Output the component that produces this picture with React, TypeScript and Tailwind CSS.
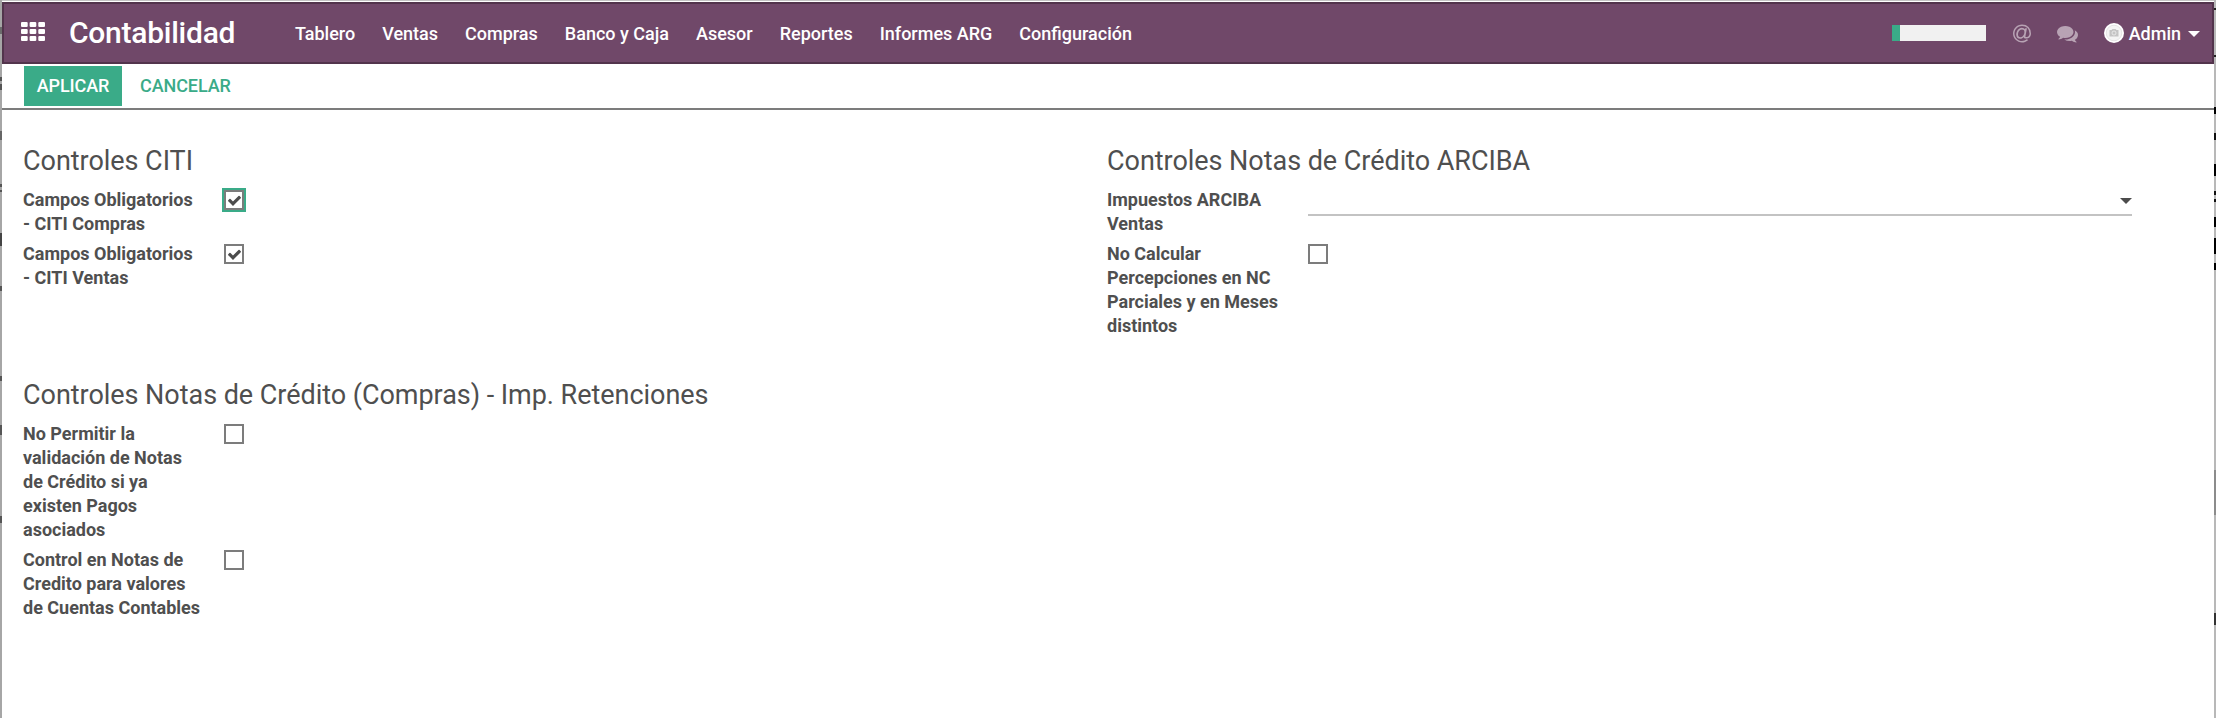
import React from "react";

const Check = () => (
  <svg viewBox="0 0 1792 1792" className="h-[15px] w-[15px] fill-[#4c4c4c]">
    <path d="M1671 566q0 40-28 68l-724 724-136 136q-28 28-68 28t-68-28l-136-136-362-362q-28-28-28-68t28-68l136-136q28-28 68-28t68 28l294 295 656-657q28-28 68-28t68 28l136 136q28 28 28 68z" />
  </svg>
);

const AppsIcon = () => (
  <svg viewBox="0 0 24 19" className="h-[19px] w-6 fill-white">
    {[0, 7, 14].map((y) =>
      [0, 8.6, 17.3].map((x) => <rect key={`${x}-${y}`} x={x} y={y} width="6.7" height="5" rx="1.1" />)
    )}
  </svg>
);

const AtIcon = () => (
  <svg viewBox="0 0 1536 1792" className="h-[21px] w-[18px] fill-[#b8a3b4]">
    <path d="M972 775q0-108-53.5-169t-147.5-61q-63 0-124 30.5t-110 84.5-79.5 137-30.5 180q0 112 53.5 173t150.5 61q96 0 176-66.5t122.5-166 42.5-203.5zm564 121q0 111-37 197t-98.5 135-131.5 74.5-145 27.5q-6 0-15.5.5t-16.5.5q-95 0-142-53-28-33-33-83-52 66-131.5 110t-173.5 44q-161 0-249.5-95.5t-88.5-269.5q0-157 66-290t179-210.5 246-77.5q87 0 155 35.5t106 99.5l2-19 11-56q1-6 5.5-12t9.5-6h118q5 0 13 11 5 5 3 16l-120 614q-5 24-5 48 0 39 12.5 52t44.5 13q28-1 57-5.5t73-24 77-50 57-89.5 24-137q0-292-174-466t-466-174q-130 0-248.5 51t-204 136.5-136.5 204-51 248.5 51 248.5 136.5 204 204 136.5 248.5 51q228 0 405-144 11-9 24-8t21 12l41 49q8 12 7 24-2 13-12 22-102 83-227.5 128t-258.5 45q-156 0-298-61t-245-164-164-245-61-298 61-298 164-245 245-164 298-61q344 0 556 212t212 556z" />
  </svg>
);

const CommentsIcon = () => (
  <svg viewBox="0 0 1792 1792" className="h-[21px] w-[21px] fill-[#b8a3b4]">
    <path d="M1408 768q0 139-94 257t-256.5 186.5-353.5 68.5q-86 0-176-16-124 88-278 128-36 9-86 16h-3q-11 0-20.5-8t-11.5-21q-1-3-1-6.5t.5-6.5 2-6l2.5-5 3.5-5.5 4-5 4.5-5 4-4.5q5-6 23-25t26-29.5 22.5-29 25-38.5 20.5-44q-124-72-195-177t-71-224q0-139 94-257t256.5-186.5 353.5-68.5 353.5 68.5 256.5 186.5 94 257zm384 256q0 120-71 224.5t-195 176.5q10 24 20.5 44t25 38.5 22.5 29 26 29.5 23 25q1 1 4 4.5t4.5 5 4 5 3.5 5.5l2.5 5 2 6 .5 6.5-1 6.5q-3 14-13 22t-22 7q-50-7-86-16-154-40-278-128-90 16-176 16-271 0-472-132 58 4 88 4 161 0 309-45t264-129q125-92 192-212t67-254q0-77-23-152 129 71 204 178t75 230z" />
  </svg>
);

const Avatar = () => (
  <svg viewBox="0 0 20 20" className="h-5 w-5">
    <circle cx="10" cy="10" r="10" fill="#fff" />
    <circle cx="10" cy="10" r="7.8" fill="#f4f4f4" stroke="#e0e0e0" strokeWidth="0.8" />
    <path d="M5.5 7h2l1-1h3l1 1h2v6.5h-9z" fill="#c4c4c4" />
    <circle cx="10" cy="10" r="2" fill="#c4c4c4" stroke="#eee" strokeWidth=".8" />
  </svg>
);

const Caret = ({ className }: { className: string }) => (
  <svg viewBox="0 0 12 6" className={`h-1.5 w-3 ${className}`}>
    <path d="M0 0h12L6 6z" />
  </svg>
);

const Checkbox = ({ checked = false, focused = false }: { checked?: boolean; focused?: boolean }) => (
  <span
    className={`mt-0.5 flex h-5 w-5 shrink-0 items-center justify-center border-2 border-[#7c7c7c] bg-white ${
      focused ? "ring-2 ring-[#3aab88]" : ""
    }`}
  >
    {checked && <Check />}
  </span>
);

const Field = ({ lines, children }: { lines: string[]; children: React.ReactNode }) => (
  <div className="mb-[6px] flex">
    <label className="w-[201px] shrink-0 text-[18px] leading-6 font-bold whitespace-nowrap">
      {lines.map((l) => (
        <span key={l} className="block">{l}</span>
      ))}
    </label>
    {children}
  </div>
);

const Heading = ({ children }: { children: React.ReactNode }) => (
  <h2 className="mb-[11px] text-[27px] leading-[31px] font-normal tracking-[-0.04px] whitespace-nowrap">{children}</h2>
);

const MENU = ["Tablero", "Ventas", "Compras", "Banco y Caja", "Asesor", "Reportes", "Informes ARG", "Configuración"];

type Mark = [start: number, end: number, color: string];

const LEFT_MARKS: Mark[] = [
  [27, 34, "#6b6b6b"], [77, 81, "#555"], [84, 90, "#555"], [131, 140, "#666"], [184, 187, "#555"],
  [190, 192, "#555"], [233, 246, "#444"], [286, 291, "#555"], [376, 381, "#555"], [425, 435, "#555"], [516, 523, "#555"],
];

const RIGHT_MARKS: Mark[] = [
  [8, 10, "#222"], [55, 57, "#222"], [107, 114, "#000"], [133, 140, "#111"], [164, 176, "#000"], [191, 195, "#111"],
  [199, 202, "#111"], [217, 227, "#000"], [238, 254, "#000"], [263, 270, "#000"], [470, 515, "#8c8c8c"], [613, 625, "#333"],
];

const Edge = ({ marks, className }: { marks: Mark[]; className: string }) => (
  <div className={`relative w-0.5 shrink-0 ${className}`}>
    {marks.map(([start, end, color]) => (
      <i key={start} className="absolute inset-x-0" style={{ top: start, height: end - start, background: color }} />
    ))}
  </div>
);

export default function App() {
  return (
    <div className="flex h-[718px] w-[2216px] overflow-hidden bg-white font-['Roboto',sans-serif] text-[#4f4f4f]">
      <Edge marks={LEFT_MARKS} className="bg-[#a6a6a6]" />
      <div className="flex min-w-0 flex-1 flex-col border-t border-[#c4c4c4] pt-px">
        <header className="flex h-[62px] shrink-0 items-center border-2 border-[#52344c] bg-[#704869] text-[18px] font-medium text-white">
          <div className="-mt-1 ml-[17px]"><AppsIcon /></div>
          <div className="ml-6 w-[226px] text-[30px] leading-none tracking-[-0.25px]">Contabilidad</div>
          <nav className="flex gap-[27px] whitespace-nowrap">
            {MENU.map((m) => <a key={m}>{m}</a>)}
          </nav>
          <div className="mr-3 ml-auto flex items-center">
            <div className="flex h-4 w-[94px] bg-[#f1f1f1]"><div className="w-2 bg-[#3aab88]" /></div>
            <div className="ml-[27px]"><AtIcon /></div>
            <div className="ml-[26px]"><CommentsIcon /></div>
            <div className="ml-[26px]"><Avatar /></div>
            <span className="ml-[5px]">Admin</span>
            <Caret className="mt-0.5 ml-[7px] fill-white" />
          </div>
        </header>
        <div className="flex h-[46px] shrink-0 items-start border-b-2 border-[#7c7c7c] pt-0.5 pl-[22px] text-[18px] leading-10 font-medium tracking-[-0.1px]">
          <button className="h-10 w-[98px] bg-[#3aab88] text-white">APLICAR</button>
          <button className="ml-[18px] h-10 text-[#3aab88]">CANCELAR</button>
        </div>
        <main className="grid grid-cols-[1084px_1fr] pt-9 pl-[21px]">
          <section className="h-[234px]">
            <Heading>Controles CITI</Heading>
            <Field lines={["Campos Obligatorios", "- CITI Compras"]}><Checkbox checked focused /></Field>
            <Field lines={["Campos Obligatorios", "- CITI Ventas"]}><Checkbox checked /></Field>
          </section>
          <section>
            <Heading>Controles Notas de Crédito ARCIBA</Heading>
            <Field lines={["Impuestos ARCIBA", "Ventas"]}>
              <div className="flex h-[28px] w-[824px] items-center justify-end border-b-2 border-[#c3c3c3]">
                <Caret className="fill-[#4c4c4c]" />
              </div>
            </Field>
            <Field lines={["No Calcular", "Percepciones en NC", "Parciales y en Meses", "distintos"]}><Checkbox /></Field>
          </section>
          <section>
            <Heading>Controles Notas de Crédito (Compras) - Imp. Retenciones</Heading>
            <Field lines={["No Permitir la", "validación de Notas", "de Crédito si ya", "existen Pagos", "asociados"]}><Checkbox /></Field>
            <Field lines={["Control en Notas de", "Credito para valores", "de Cuentas Contables"]}><Checkbox /></Field>
          </section>
        </main>
      </div>
      <Edge marks={RIGHT_MARKS} className="bg-[#b8b8b8]" />
    </div>
  );
}
